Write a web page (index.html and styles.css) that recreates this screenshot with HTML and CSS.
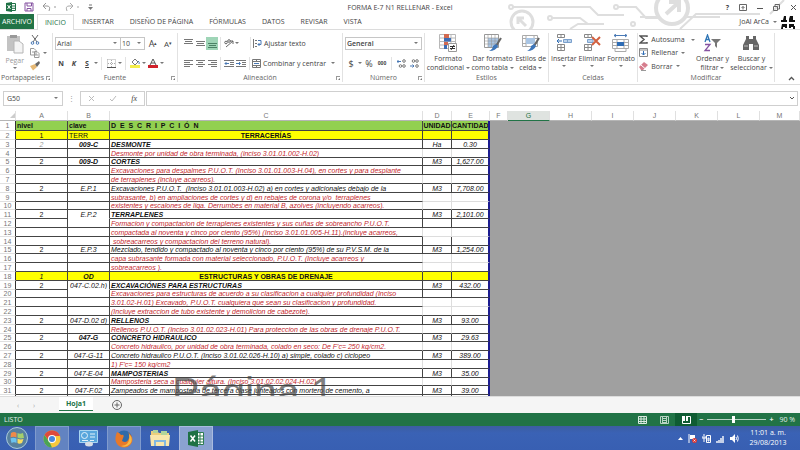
FILE: index.html
```html
<!DOCTYPE html>
<html lang="es">
<head>
<meta charset="utf-8">
<title>FORMA E-7 N1 RELLENAR - Excel</title>
<link rel="stylesheet" href="styles.css">
</head>
<body>
<div class="app">
  <header class="top">
    <svg class="circuit" width="320" height="29" viewBox="0 0 320 29" fill="none" stroke="#dedede" stroke-width="2">
      <path d="M50 7H110L118 15H144M72 18H100L108 24H124M160 17H240M200 29L216 14H280M290 14L304 0M90 29L98 24H124"/>
      <circle cx="31" cy="7" r="2"/><path d="M33 7H50M138 7H156L166 18H180"/><circle cx="136" cy="7" r="2"/><circle cx="70" cy="18" r="2"/><circle cx="153" cy="24" r="2"/>
      <circle cx="42" cy="22" r="11" stroke-width="3"/><path d="M46 26L38 18M38 24V18H44" stroke-width="3"/>
      <circle cx="192" cy="8" r="16" stroke-width="4" fill="#fff"/><path d="M186 14L198 3M189 2H199V12" stroke-width="4"/>
    </svg>
    <div class="titlebar">
      <div class="quick">
        <svg width="10" height="10" viewBox="0 0 10 10"><path d="M0 1L6 0V10L0 9Z" fill="#1e7145"/><path d="M6 1.500H9.500V8.500H6M6 4H9.500M6 6.300H9.500" fill="none" stroke="#1e7145"/><path d="M1.500 3L4.500 7M4.500 3L1.500 7" stroke="#fff"/></svg>
        <button aria-label="Guardar"><svg width="10" height="10" viewBox="0 0 10 10" fill="none" stroke="#8552a1"><path d="M1 1H9V9H1ZM3 1V4H7.500V1M3 9V6.500H7V9"/></svg></button>
        <button aria-label="Deshacer"><svg width="15" height="10" viewBox="0 0 15 10" fill="none" stroke="#999"><path d="M4 1L1 4L4 7M1 4H5Q9 4 7 9"/><path d="M12 5H14"/></svg></button>
        <button aria-label="Rehacer"><svg width="15" height="10" viewBox="0 0 15 10" fill="none" stroke="#aaa"><path d="M5 1L8 4L5 7M8 4H4Q0 4 2 9"/><path d="M12 5H14"/></svg></button>
        <button aria-label="Personalizar"><svg width="5" height="6" viewBox="0 0 5 6"><path d="M1 1H4" stroke="#777"/><path d="M0 3H5L2.500 6Z" fill="#777"/></svg></button>
      </div>
      <h1>FORMA E-7 N1 RELLENAR - Excel</h1>
      <div class="winctl">
        <button aria-label="Ayuda"><b>?</b></button>
        <button aria-label="Opciones de cinta"><svg width="8" height="7" viewBox="0 0 8 7" fill="none" stroke="#666"><path d="M.5.500H7.500V6.500H.5ZM4 5.500V2.500M2.500 4L4 2.500L5.500 4"/></svg></button>
        <button aria-label="Minimizar"><svg width="6" height="7" viewBox="0 0 6 7"><path d="M0 4.500H6" stroke="#555"/></svg></button>
        <button aria-label="Restaurar"><svg width="7" height="7" viewBox="0 0 7 7" fill="none" stroke="#666"><path d="M.5 2.500H4.500V6.500H.5ZM2 2V.5H6.500V5H5"/></svg></button>
        <button aria-label="Cerrar"><svg width="7" height="7" viewBox="0 0 7 7"><path d="M1 1L6 6M6 1L1 6" stroke="#555"/></svg></button>
      </div>
    </div>
    <nav class="tabs">
      <a class="file" href="#">ARCHIVO</a>
      <a class="on" href="#">INICIO</a>
      <a href="#">INSERTAR</a>
      <a href="#">DISEÑO DE PÁGINA</a>
      <a href="#">FÓRMULAS</a>
      <a href="#">DATOS</a>
      <a href="#">REVISAR</a>
      <a href="#">VISTA</a>
      <span class="user">JoAl ArCa <i class="dd"></i>
        <svg width="14" height="14" viewBox="0 0 14 14"><path fill="#fff" d="M0 0H14V14H0Z"/><path d="M3 1h2v4h1v2H0V5h2zM9 1h3v4h2v2H8V4zM1 9h5v4H4v-1H2v2H0zM8 9h5v2h1v3h-2v-2h-2v1H8z" fill="#111"/></svg>
      </span>
    </nav>
  </header>

  <section class="ribbon">
    <div class="group clip">
      <div class="gbody">
        <button class="big faded"><svg width="18" height="20" viewBox="0 0 18 20"><path d="M1 2H14V17H1Z" fill="#c3c3c3"/><path d="M4 1H11V4H4Z" fill="#999"/><path d="M8 7H13L17 10V19H8Z" fill="#f4f4f4" stroke="#b5b5b5"/></svg>Pegar<i class="dd"></i></button>
        <div class="stack">
          <button aria-label="Cortar"><svg width="10" height="10" viewBox="0 0 10 10" fill="none" stroke="#666"><path d="M2 0L7 7M8 0L3 7"/><circle cx="2.500" cy="8" r="1.300" stroke="#4979b5"/><circle cx="7.500" cy="8" r="1.300" stroke="#4979b5"/></svg></button>
          <button aria-label="Copiar"><svg width="10" height="10" viewBox="0 0 10 10" fill="#fff" stroke="#999"><path d="M.5.500H4L6 2.500V7H.5ZM4.500 3.500H7L9 5.500V9.500H4.500ZM2 4H4M6 7H8"/></svg><i class="dd"></i></button>
          <button aria-label="Copiar formato"><svg width="10" height="10" viewBox="0 0 10 10"><path d="M0 5L5 3L7 6L3 9.500Z" fill="#e6b976"/><path d="M5 3L9 0L10 2L7 6Z" fill="#666"/></svg></button>
        </div>
      </div>
      <div class="glabel">Portapapeles<i class="launch"></i></div>
    </div>

    <div class="group font">
      <div class="gbody rows">
        <div class="line">
          <div class="combo">
            <span class="sel face"><select aria-label="Fuente"><option>Arial</option></select><i class="dd"></i></span>
            <span class="sel size"><select aria-label="Tamaño"><option>10</option></select><i class="dd"></i></span>
          </div>
          <button class="tool grow">A<sup>▴</sup></button>
          <button class="tool shrink">A<sup>▾</sup></button>
        </div>
        <div class="line">
          <button class="tool"><b>N</b></button>
          <button class="tool"><b><i>K</i></b></button>
          <button class="tool"><b><u>S</u></b></button><i class="dd"></i>
          <span class="sep"></span>
          <button class="tool" aria-label="Bordes"><svg width="9" height="9" viewBox="0 0 9 9" fill="none" stroke="#aaa"><path d="M.5.500H8.500V8.500M.5.500V8.500M4.500 1V8M1 4.500H8" stroke-dasharray="1 1"/><path d="M0 8.500H9" stroke="#555"/></svg></button><i class="dd"></i>
          <span class="sep"></span>
          <button class="tool" aria-label="Color de relleno"><svg width="10" height="10" viewBox="0 0 10 10"><path d="M2 4L5 1L8 4L5 7Z" fill="#fff" stroke="#777"/><path d="M8 3Q10 4 9 6" fill="none" stroke="#4979b5"/><path d="M0 7H10V10H0Z" fill="#f4ee4c"/></svg></button><i class="dd"></i>
          <button class="tool" aria-label="Color de fuente"><svg width="10" height="10" viewBox="0 0 10 10"><path d="M2 7L5 1L8 7M3 5H7" fill="none" stroke="#555"/><path d="M0 7H10V10H0Z" fill="#d0202a"/></svg></button><i class="dd"></i>
        </div>
      </div>
      <div class="glabel">Fuente<i class="launch"></i></div>
    </div>

    <div class="group align">
      <div class="gbody rows">
        <div class="line">
          <button class="tool" aria-label="Alinear arriba"><svg width="9" height="9" viewBox="0 0 9 9" stroke="#777"><path d="M0 .5H9M1 2.500H8M0 4.500H9"/></svg></button>
          <button class="tool" aria-label="Alinear en medio"><svg width="9" height="9" viewBox="0 0 9 9" stroke="#777"><path d="M0 2.500H9M1 4.500H8M0 6.500H9"/></svg></button>
          <button class="tool picked" aria-label="Alinear abajo"><svg width="9" height="9" viewBox="0 0 9 9" stroke="#4b8265"><path d="M0 4.500H9M1 6.500H8M0 8.500H9"/></svg></button>
          <span class="sep"></span>
          <button class="tool" aria-label="Orientación"><svg width="10" height="9" viewBox="0 0 10 9" fill="none" stroke="#666"><path d="M2 8L9 2M9 5V2H6"/><circle cx="2" cy="3.500" r="1.300"/><circle cx="5" cy="2" r="1.300"/></svg></button><i class="dd"></i>
          <span class="sep far"></span>
          <button class="wide"><svg width="9" height="9" viewBox="0 0 9 9" fill="none" stroke="#777"><path d="M.5 0V9M2 1.500H4M2 4.500H4M2 7.500H4"/><path d="M5 1.500H8V5.500H5M6.500 4L5 5.500L6.500 7" stroke="#4979b5"/></svg>Ajustar texto</button>
        </div>
        <div class="line">
          <button class="tool" aria-label="Izquierda"><svg width="9" height="9" viewBox="0 0 9 9" stroke="#777"><path d="M0 1.500H9M0 3.500H6M0 5.500H9M0 7.500H6"/></svg></button>
          <button class="tool" aria-label="Centrar"><svg width="9" height="9" viewBox="0 0 9 9" stroke="#777"><path d="M0 1.500H9M2 3.500H7M0 5.500H9M2 7.500H7"/></svg></button>
          <button class="tool" aria-label="Derecha"><svg width="9" height="9" viewBox="0 0 9 9" stroke="#777"><path d="M0 1.500H9M3 3.500H9M0 5.500H9M3 7.500H9"/></svg></button>
          <span class="sep"></span>
          <button class="tool" aria-label="Disminuir sangría"><svg width="10" height="9" viewBox="0 0 10 9" fill="none" stroke="#777"><path d="M0 1.500H10M6 3.500H10M6 5.500H10M0 7.500H10"/><path d="M5 4.500H1M2.500 3L1 4.500L2.500 6" stroke="#4979b5"/></svg></button>
          <button class="tool" aria-label="Aumentar sangría"><svg width="10" height="9" viewBox="0 0 10 9" fill="none" stroke="#777"><path d="M0 1.500H10M6 3.500H10M6 5.500H10M0 7.500H10"/><path d="M0 4.500H4M3 3L4.500 4.500L3 6" stroke="#4979b5"/></svg></button>
          <span class="sep"></span>
          <button class="wide"><svg width="9" height="9" viewBox="0 0 9 9" fill="none" stroke="#777"><path d="M.5.500H8.500V8.500H.5ZM0 2.500H9M0 6.500H9M4.500 0V2M4.500 7V9"/><path d="M2 4.500H7" stroke="#4979b5"/></svg>Combinar y centrar<i class="dd gap"></i></button>
        </div>
      </div>
      <div class="glabel">Alineación<i class="launch"></i></div>
    </div>

    <div class="group number">
      <div class="gbody rows">
        <div class="line"><span class="sel format"><select aria-label="Formato de número"><option>General</option></select><i class="dd"></i></span></div>
        <div class="line">
          <button class="tool large">$</button><i class="dd"></i>
          <button class="tool large">%</button>
          <button class="tool tiny"><b>000</b></button>
          <span class="sep"></span>
          <button class="tool two" aria-label="Aumentar decimales"><svg width="9" height="9" viewBox="0 0 9 9" fill="none" stroke="#777"><path d="M0 2.500H4M1.500 1L0 2.500L1.500 4" stroke="#4979b5"/><circle cx="7" cy="2" r="1.300"/><circle cx="3.500" cy="7" r="1.300"/><circle cx="7" cy="7" r="1.300"/></svg></button>
          <button class="tool two" aria-label="Disminuir decimales"><svg width="9" height="9" viewBox="0 0 9 9" fill="none" stroke="#777"><path d="M0 7H4M2.500 5.500L4 7L2.500 8.500" stroke="#4979b5"/><circle cx="3.500" cy="2" r="1.300"/><circle cx="7" cy="2" r="1.300"/><circle cx="7" cy="7" r="1.300"/></svg></button>
        </div>
      </div>
      <div class="glabel">Número<i class="launch"></i></div>
    </div>

    <div class="group styles">
      <div class="gbody">
        <button class="big"><svg width="18" height="18" viewBox="0 0 18 18"><path d="M.5.500H16.500V14.500H.5ZM0 4H17M0 7.500H17M0 11H17M12 0V14" fill="none" stroke="#b8b8b8"/><path d="M5 0H10V4H5ZM5 8H9V11H5Z" fill="#d36a50"/><path d="M5 4H12V7.500H5ZM5 11H8V15H5Z" fill="#3e6db5"/><path d="M9.500 9.500H17.500V17.500H9.500Z" fill="#fff" stroke="#999"/><path d="M11 12.500H16M11 14.500H16M15 11L12 16" stroke="#333"/></svg><span>Formato<br>condicional <i class="dd"></i></span></button>
        <button class="big"><svg width="18" height="18" viewBox="0 0 18 18"><path d="M.5.500H14.500V13.500H.5Z" fill="#fff" stroke="#999"/><path d="M4 4H14V13H4Z" fill="#a9c5e4"/><path d="M0 4H15M0 7H15M0 10H15M4 0V14M7.500 0V14M11 0V14" stroke="#999" stroke-width=".6"/><path d="M17 4L12 12" stroke="#666" stroke-width="2"/><path d="M12 10L14 12Q12 17 5 17Q9 15 9 12Z" fill="#3c75b9"/></svg><span>Dar formato<br>como tabla <i class="dd"></i></span></button>
        <button class="big"><svg width="18" height="18" viewBox="0 0 18 18"><path d="M.5 1.500H15.500V12.500H.5ZM0 4.500H16M4 1V13M12 1V13M0 9.500H16" fill="#fff" stroke="#aaa"/><path d="M4 4H13V10H4Z" fill="#a9c5e4"/><path d="M17 4L12 12" stroke="#666" stroke-width="2"/><path d="M12 10L14 12Q12 17 5 17Q9 15 9 12Z" fill="#3c75b9"/></svg><span>Estilos de<br>celda <i class="dd"></i></span></button>
      </div>
      <div class="glabel">Estilos</div>
    </div>

    <div class="group cells">
      <div class="gbody">
        <button class="big"><svg width="18" height="18" viewBox="0 0 18 18" fill="#fff" stroke="#888"><path d="M2.500.500H9.500V3.500H2.500ZM6 0V4M2.500 10.500H9.500V16.500H2.500ZM6 10V17M2 13.500H10"/><path d="M8.500 5.500H16.500V8.500H8.500ZM12.500 5V9" fill="#bcd3ec" stroke="#7ba0cc"/><path d="M7 7H2M4 5L2 7L4 9" stroke="#2f6db5"/></svg>Insertar<i class="dd"></i></button>
        <button class="big"><svg width="18" height="18" viewBox="0 0 18 18" fill="#fff" stroke="#888"><path d="M1.500.500H8.500V3.500H1.500ZM5 0V4M1.500 10.500H8.500V16.500H1.500ZM5 10V17M1 13.500H9"/><path d="M4.500 5.500H10V8.500H4.500Z" fill="#bcd3ec" stroke="#7ba0cc"/><path d="M9 3L17 11M17 3L9 11" stroke="#d2603f" stroke-width="2"/></svg>Eliminar<i class="dd"></i></button>
        <button class="big"><svg width="18" height="18" viewBox="0 0 18 18" fill="none" stroke="#888"><path d="M2 1.500H15M4 0L2 1.500L4 3M13 0L15 1.500L13 3" stroke="#4979b5"/><path d="M.5 5.500H16.500V14.500H.5ZM0 8.500H17M0 11.500H17M5 5V15M12 5V15M3 15V17.500H14V15" stroke="#aaa"/><path d="M5 8H12V12H5Z" fill="#2f6db5" stroke="none"/></svg>Formato<i class="dd"></i></button>
      </div>
      <div class="glabel">Celdas</div>
    </div>

    <div class="group edit">
      <div class="gbody">
        <div class="stack">
          <button class="wide"><svg width="9" height="9" viewBox="0 0 9 9" fill="none" stroke="#555" stroke-width="1.500"><path d="M8 2V1H1L5 4.500L1 8H8V7"/></svg>Autosuma <i class="dd gap"></i></button>
          <button class="wide"><svg width="9" height="9" viewBox="0 0 9 9" fill="none" stroke="#888"><path d="M.5.500H8.500V8.500H.5ZM0 2H9"/><path d="M4.500 3V7M2.500 5L4.500 7L6.500 5" stroke="#2f6db5"/></svg>Rellenar <i class="dd"></i></button>
          <button class="wide"><svg width="9" height="9" viewBox="0 0 9 9"><path d="M0 5L5 0L9 3L4 8H2Z" fill="#d67d8d"/><path d="M2 3L6 6.500" stroke="#fff"/><path d="M2 8.500H7" stroke="#999"/></svg>Borrar <i class="dd"></i></button>
        </div>
        <button class="big"><svg width="18" height="18" viewBox="0 0 18 18" fill="none"><path d="M2 8L4.500 1L7 8M3 5.500H6" stroke="#2f75b5" stroke-width="1.300"/><path d="M2 10.500H7L2 16.500H7" stroke="#8552a1" stroke-width="1.300"/><path d="M8 5H18L14 9V14L12 12V9Z" fill="#777"/></svg><span>Ordenar y<br>filtrar <i class="dd"></i></span></button>
        <button class="big"><svg width="18" height="18" viewBox="0 0 18 18" fill="#666"><path d="M4 2H7V5H11V2H14V5L17 11V16H11V10H7V16H1V11L4 5Z"/><path d="M2 12H6M12 12H16" stroke="#bbb"/></svg><span>Buscar y<br>seleccionar <i class="dd"></i></span></button>
      </div>
      <div class="glabel">Modificar</div>
    </div>
    <button class="collapse" aria-label="Contraer la cinta"><svg width="7" height="5" viewBox="0 0 7 5"><path d="M1 4L3.500 1.500L6 4" fill="none" stroke="#555" stroke-width="1.300"/></svg></button>
  </section>

  <section class="fbar">
    <label class="box name"><input aria-label="Cuadro de nombres" value="G50"><i class="dd"></i></label>
    <span class="dots">⋮</span>
    <div class="box fx">
      <button aria-label="Cancelar"><svg width="7" height="7" viewBox="0 0 7 7"><path d="M1 1L6 6M6 1L1 6" stroke="#bbb"/></svg></button>
      <button aria-label="Introducir"><svg width="8" height="7" viewBox="0 0 8 7"><path d="M1 4L3 6L7 1" fill="none" stroke="#bbb"/></svg></button>
      <button class="fn"><i>fx</i></button>
    </div>
    <label class="box formula"><input aria-label="Barra de fórmulas"><svg width="6" height="5" viewBox="0 0 6 5"><path d="M1 1L3 3L5 1" fill="none" stroke="#555"/></svg></label>
  </section>

  <main class="sheet">
    <table>
      <colgroup><col class="w0"><col class="wa"><col class="wb"><col class="wc"><col class="wd"><col class="we"><col class="wf"><col class="wg"><col class="wg"><col class="wg"><col class="wg"><col class="wg"><col class="wg"><col></colgroup>
      <thead><tr><th><svg width="5" height="5" viewBox="0 0 5 5"><path d="M5 0V5H0Z" fill="#ccc"/></svg></th><th>A</th><th>B</th><th>C</th><th>D</th><th>E</th><th>F</th><th class="cur">G</th><th>H</th><th>I</th><th>J</th><th>K</th><th>L</th><th>M</th></tr></thead>
      <tbody>
        <tr class="head"><th>1</th><td>nivel</td><td>clave</td><td>D&nbsp; E&nbsp; S&nbsp; C&nbsp; R&nbsp; I&nbsp; P&nbsp; C&nbsp; I&nbsp; Ó&nbsp; N</td><td>UNIDAD</td><td>CANTIDAD</td><td class="void" colspan="8" rowspan="32"></td></tr>
        <tr class="sect plain"><th>2</th><td>1</td><td>TERR</td><td>TERRACERÍAS</td><td></td><td></td></tr>
        <tr class="item"><th>3</th><td class="dim">2</td><td>009-C</td><td>DESMONTE</td><td>Ha</td><td>0.30</td></tr>
        <tr class="note loose"><th>4</th><td></td><td></td><td>Desmonte por unidad de obra terminada, (inciso 3.01.01.002-H.02)</td><td></td><td></td></tr>
        <tr class="item"><th>5</th><td>2</td><td>009-D</td><td>CORTES</td><td>M3</td><td>1,627.00</td></tr>
        <tr class="note"><th>6</th><td></td><td></td><td>Excavaciones para despalmes P.U.O.T. (Inciso 3.01.01.003-H.04), en cortes y para desplante</td><td></td><td></td></tr>
        <tr class="note loose"><th>7</th><td></td><td></td><td>de terraplenes (incluye acarreos).</td><td></td><td></td></tr>
        <tr><th>8</th><td>2</td><td>E.P.1</td><td>Excavaciones P.U.O.T.&nbsp; (Inciso 3.01.01.003-H.02) a) en cortes y adicionales debajo de la</td><td>M3</td><td>7,708.00</td></tr>
        <tr class="note loose bare"><th>9</th><td></td><td></td><td>subrasante, b) en ampliaciones de cortes y d) en rebajes de corona y/o&nbsp; terraplenes</td><td></td><td></td></tr>
        <tr class="note loose"><th>10</th><td></td><td></td><td>existentes y escalones de liga. Derrumbes en material B, azolves (incluyendo acarreos).</td><td></td><td></td></tr>
        <tr class="item light joined"><th>11</th><td>2</td><td>E.P.2</td><td>TERRAPLENES</td><td>M3</td><td>2,101.00</td></tr>
        <tr class="note"><th>12</th><td></td><td></td><td>Formacion y compactacion de terraplenes existentes y sus cuñas de sobreancho P.U.O.T.</td><td></td><td></td></tr>
        <tr class="note loose bare"><th>13</th><td></td><td></td><td>compactada al noventa y cinco por ciento (95%) (Inciso 3.01.01.005-H.11).(incluye acarreos,</td><td></td><td></td></tr>
        <tr class="note"><th>14</th><td></td><td></td><td>&nbsp;sobreacarreos y compactacion del terreno natural).</td><td></td><td></td></tr>
        <tr><th>15</th><td>2</td><td>E.P.3</td><td>Mezclado, tendido y compactado al noventa y cinco por ciento (95%) de su P.V.S.M. de la</td><td>M3</td><td>1,254.00</td></tr>
        <tr class="note loose bare"><th>16</th><td></td><td></td><td>capa subrasante formada con material seleccionado, P.U.O.T. (Incluye acarreos y</td><td></td><td></td></tr>
        <tr class="note loose"><th>17</th><td></td><td></td><td>sobreacarreos ).</td><td></td><td></td></tr>
        <tr class="sect"><th>18</th><td>1</td><td>OD</td><td>ESTRUCTURAS Y OBRAS DE DRENAJE</td><td></td><td></td></tr>
        <tr class="item light joined"><th>19</th><td>2</td><td>047-C.02.h)</td><td>EXCAVACIÓNES PARA ESTRUCTURAS</td><td>M3</td><td>432.00</td></tr>
        <tr class="note"><th>20</th><td></td><td></td><td>Excavaciones para estructuras de acuerdo a su clasificacion a cualquier profundidad (Inciso</td><td></td><td></td></tr>
        <tr class="note loose bare"><th>21</th><td></td><td></td><td>3.01.02-H.01) Excavado, P.U.O.T. cualquiera que sean su clasificacion y profundidad.</td><td></td><td></td></tr>
        <tr class="note loose"><th>22</th><td></td><td></td><td>(Incluye extraccion de tubo existente y demolicion de cabezote).</td><td></td><td></td></tr>
        <tr class="item light"><th>23</th><td>2</td><td>047-D.02 d)</td><td>RELLENOS</td><td>M3</td><td>93.00</td></tr>
        <tr class="note loose"><th>24</th><td></td><td></td><td>Rellenos P.U.O.T. (Inciso 3.01.02.023-H.01) Para proteccion de las obras de drenaje P.U.O.T.</td><td></td><td></td></tr>
        <tr class="item"><th>25</th><td>2</td><td>047-G</td><td>CONCRETO HIDRAULICO</td><td>M3</td><td>29.63</td></tr>
        <tr class="note loose"><th>26</th><td></td><td></td><td>Concreto hidraulico, por unidad de obra terminada, colado en seco: De F'c= 250 kg/cm2.</td><td></td><td></td></tr>
        <tr><th>27</th><td>2</td><td>047-G-11</td><td>Concreto hidraulico P.U.O.T. (Inciso 3.01.02.026-H.10) a) simple, colado c) ciclopeo</td><td>M3</td><td>389.00</td></tr>
        <tr class="note loose"><th>28</th><td></td><td></td><td>1) F'c= 150 kg/cm2</td><td></td><td></td></tr>
        <tr class="item light"><th>29</th><td>2</td><td>047-E-04</td><td>MAMPOSTERIAS</td><td>M3</td><td>35.00</td></tr>
        <tr class="note loose"><th>30</th><td></td><td></td><td>Mamposteria seca a cualquier altura. (Inciso 3.01.02.02.024-H.02)</td><td></td><td></td></tr>
        <tr><th>31</th><td>2</td><td>047-F.02</td><td>Zampeados de mamposteria de tercera clase junteados con mortero de cemento, a</td><td>M3</td><td>39.00</td></tr>
        <tr><th>32</th><td></td><td></td><td>cualquier altura P.U.O.T. (Inciso 3.01.02.027-H.04)</td><td></td><td></td></tr>
      </tbody>
    </table>
    <div class="watermark">Página 1</div>
  </main>

  <nav class="sheets">
    <button aria-label="Hoja anterior">‹</button><button aria-label="Hoja siguiente">›</button>
    <a href="#">Hoja1</a>
    <button class="add" aria-label="Nueva hoja"><svg width="10" height="10" viewBox="0 0 10 10" fill="none" stroke="#666"><circle cx="5" cy="5" r="4.500"/><path d="M5 2.500V7.500M2.500 5H7.500"/></svg></button>
  </nav>

  <footer class="status">
    <span class="ready">LISTO</span>
    <button class="view" aria-label="Normal"><svg width="9" height="8" viewBox="0 0 9 8" fill="none" stroke="#dcebe2"><path d="M.5.500H8.500V7.500H.5ZM3 0V8M6 0V8M0 3H9M0 5.500H9"/></svg></button>
    <button class="view" aria-label="Diseño de página"><svg width="9" height="8" viewBox="0 0 9 8" fill="none" stroke="#b9d4c5"><path d="M.5.500H8.500V7.500H.5ZM2.500 1V7M6.500 1V7M3 2.500H6M3 4.500H6M3 6.500H6"/></svg></button>
    <button class="view on" aria-label="Vista de saltos de página"><svg width="9" height="8" viewBox="0 0 9 8"><path d="M0 0H3V5H0ZM4 0H6V5H4Z" fill="#fff"/><path d="M6 .5H8.500V7.500H.5V5" fill="none" stroke="#fff"/></svg></button>
    <span class="pm">−</span><input type="range" min="0" max="200" value="90" aria-label="Zoom"><span class="pm">+</span>
    <span class="pct">90 %</span>
  </footer>

  <footer class="taskbar">
    <button class="task start" aria-label="Inicio"><svg width="22" height="22" viewBox="0 0 22 22"><circle cx="11" cy="11" r="10.500" fill="#57809e" stroke="#a9c9dc"/><path d="M5 6Q8 4 10.500 6V10.500Q7 9 4.500 10.500Z" fill="#ee8a4a"/><path d="M11.500 6Q14 7.500 17 6L18 11Q14 12 11.500 10.500Z" fill="#a4cf6c"/><path d="M4.500 11.500Q7 10 10.500 11.500V16Q8 14.500 5.500 16Z" fill="#6cc3ef"/><path d="M11.500 11.500Q14 13 17.500 12L16 16Q13 17.500 11.500 16Z" fill="#f8dc60"/></svg></button>
    <button class="task open" aria-label="Chrome"><svg width="18" height="18" viewBox="0 0 18 18"><circle cx="9" cy="9" r="8.500" fill="#f4c93c"/><path d="M1.500 5A8.500 8.500 0 0 1 17 6H9L6 11Z" fill="#dd4a3c"/><path d="M1.500 5L7 13L9 17.500A8.500 8.500 0 0 1 1.500 5Z" fill="#4aa454"/><circle cx="9" cy="9" r="4" fill="#fff"/><circle cx="9" cy="9" r="3" fill="#4687dd"/></svg></button>
    <button class="task" aria-label="Panel de control"><svg width="19" height="17" viewBox="0 0 19 17"><path d="M.5.500H18.500V12.500H.5Z" fill="#58a6dc" stroke="#a9d6f1"/><circle cx="5.500" cy="5.500" r="3" fill="none" stroke="#e2f2fb"/><path d="M11 4H16M11 7H16M3 10.500H9M11 10.500H15" stroke="#e2f2fb"/><ellipse cx="10" cy="14" rx="4" ry="2.500" fill="#d8dde5"/></svg></button>
    <button class="task open" aria-label="Firefox"><svg width="18" height="18" viewBox="0 0 18 18"><circle cx="9" cy="8.500" r="8" fill="#2f6aa9"/><path d="M2 2Q5 3 6 5Q10 4 8 8L7 11Q12 14 14 8Q15 5 13 2Q20 8 16 14Q11 20 4 16Q-1 12 1 5Z" fill="#e8792a"/><path d="M14 4Q19 9 15 14Q11 18 6 16Q16 15 14 4Z" fill="#f6ba45"/></svg></button>
    <button class="task" aria-label="Explorador"><svg width="20" height="18" viewBox="0 0 20 18"><path d="M1 2H7L9 4H19V16H1Z" fill="#ebcf7d"/><path d="M3 1H8V4H3ZM11 2H17V6H11Z" fill="#b1d49b"/><path d="M0 6H20L19 17H1Z" fill="#f9e7ac"/><path d="M5 17V12H15V17" fill="none" stroke="#83b9df" stroke-width="2"/></svg></button>
    <button class="task open bright" aria-label="Excel"><svg width="16" height="17" viewBox="0 0 16 17"><path d="M9 2.500H15.500V14.500H9M9 6H15M9 9H15M9 12H15M12 3V14" fill="#fff" stroke="#2d7d50"/><path d="M0 2L10 0V17L0 15Z" fill="#1e7145"/><path d="M2.500 5.500L7 11.500M7 5.500L2.500 11.500" stroke="#fff" stroke-width="1.500"/></svg></button>
    <div class="tray">
      <svg width="5" height="3" viewBox="0 0 5 3"><path d="M0 3L2.500 0L5 3Z" fill="#fff"/></svg>
      <svg width="9" height="9" viewBox="0 0 9 9"><path d="M1 0V9" stroke="#fff"/><path d="M2 1H7V5H2Z" fill="#fff"/><circle cx="6.500" cy="6.500" r="2.500" fill="#d83a3a"/><path d="M5.500 5.500L7.500 7.500M7.500 5.500L5.500 7.500" stroke="#fff" stroke-width=".7"/></svg>
      <svg width="9" height="9" viewBox="0 0 9 9" fill="none" stroke="#fff"><path d="M4.500 1.500H8.500V8.500H4.500ZM2 0V8M0 2V4H4V2"/><path d="M6 4H7V7H6Z"/></svg>
      <svg width="9" height="9" viewBox="0 0 9 9" stroke="#fff" stroke-width="1.400"><path d="M1 9V7M3 9V6M5 9V4M7 9V2"/></svg>
      <svg width="9" height="9" viewBox="0 0 9 9"><path d="M0 3H2L5 0V9L2 6H0Z" fill="#fff"/><path d="M6 3Q7 4.500 6 6M7.500 1.500Q9 4.500 7.500 7.500" fill="none" stroke="#fff"/></svg>
      <div class="clock">11:01 a. m.<br>29/08/2013</div>
    </div>
  </footer>
</div>
</body>
</html>
```

FILE: styles.css
```css
* { box-sizing: border-box; }

body {
  margin: 0;
  font: 7px/9px "Open Sans", "Noto Sans", sans-serif;
  color: #444;
  background: #fff;
}

button, input, select { font: inherit; color: inherit; }
button { padding: 0; border: 0; background: none; }
a { color: inherit; text-decoration: none; }
svg { display: block; flex: none; }

.app {
  height: 100vh;
  display: flex;
  flex-direction: column;
  overflow: hidden;
}

.dd {
  display: inline-block;
  flex: none;
  vertical-align: middle;
  border: 2px solid transparent;
  border-top-color: #777;
  border-bottom: 0;
}

/* title and tabs */
.top { position: relative; border-bottom: 1px solid #dcdcdc; }
.circuit { position: absolute; right: 0; top: 0; z-index: -1; }

.titlebar {
  height: 14px;
  display: grid;
  grid-template-columns: 1fr auto 1fr;
  align-items: center;
}
.titlebar h1 { margin: 0; font: inherit; }
.quick { display: flex; align-items: center; gap: 8px; padding-left: 6px; }
.winctl { display: flex; align-items: center; justify-content: flex-end; gap: 10px; padding-right: 3px; }

.tabs { height: 15px; display: flex; align-items: stretch; line-height: 15px; }
.tabs a { padding: 0 8px 0 7px; margin-right: 1px; white-space: nowrap; }
.tabs .file { padding: 0 2px; background: #217346; color: #fff; margin-right: 3px; }
.tabs .on { color: #217346; border: 1px solid #dcdcdc; border-bottom: 0; padding: 0 7px; background: #fff; margin-bottom: -1px; }
.user { margin-left: auto; display: flex; align-items: center; gap: 4px; padding-right: 5px; }

/* ribbon */
.ribbon { display: flex; height: 55px; padding-top: 3px; border-bottom: 1px solid #dcdcdc; }
.group {
  display: flex;
  flex-direction: column;
  margin-bottom: 2px;
  border-right: 1px solid #e2e2e2;
  white-space: nowrap;
}
.clip { flex: 0 0 53px; }
.font { flex: 0 0 120px; }
.align { flex: 0 0 165px; }
.number { flex: 0 0 82px; }
.styles { flex: 0 0 124px; }
.cells { flex: 0 0 89px; }
.edit { flex: 0 0 137px; }

.gbody { flex: 1; display: flex; justify-content: space-evenly; min-height: 0; }
.rows { flex-direction: column; justify-content: space-around; padding: 0 2px; }
.glabel { position: relative; text-align: center; color: #666; }
.clip .glabel { text-align: left; padding-left: 1px; }
.launch {
  position: absolute;
  right: 2px;
  bottom: 2px;
  width: 4px;
  height: 4px;
  border: solid #999;
  border-width: 1px 0 0 1px;
}
.launch::after {
  content: "";
  position: absolute;
  right: 0;
  bottom: 0;
  border: 1px solid #777;
  border-top-color: transparent;
  border-left-color: transparent;
}

.line { display: flex; align-items: center; height: 14px; }
.tool { width: 12px; height: 13px; display: grid; place-items: center; }
.picked { background: #9fd5b7; }
.large { font-size: 9px; }
.tiny { font-size: 5px; }
.sep { width: 1px; height: 13px; margin: 0 2px; background: #e2e2e2; }
.wide { display: flex; align-items: center; gap: 2px; }
.grow, .shrink { display: flex; align-items: center; justify-content: center; width: 14px; font-size: 9px; }
.shrink { font-size: 8px; }
.tool sup { font-size: 5px; line-height: 5px; }

.font .line { gap: 1px; }
.align .line { padding-left: 2px; }
.align .far { margin-left: 11px; }
.number .line:last-child { gap: 1px; }

.combo { display: flex; }
.sel { display: flex; align-items: center; position: relative; height: 13px; border: 1px solid #c6c6c6; }
.sel select { appearance: none; width: 100%; height: 100%; border: 0; padding: 0 1px; background: none; }
.sel .dd { position: absolute; right: 3px; }
.face { width: 66px; }
.size { width: 25px; margin-left: -1px; }
.format { width: 77px; }
.format select { font-weight: 600; }

.big { display: flex; flex-direction: column; align-items: center; gap: 2px; padding-top: 1px; }
.faded { color: #999; }
.stack { display: flex; flex-direction: column; justify-content: space-around; align-items: flex-start; }
.stack button { display: flex; align-items: center; gap: 3px; }
.gap { margin-left: 3px; }
.collapse { margin: auto 5px 3px auto; }

/* formula bar */
.fbar { display: flex; align-items: center; height: 26px; padding: 0 2px 0 3px; }
.box { display: flex; align-items: center; height: 15px; border: 1px solid #cfcfcf; }
.box input { flex: 1; min-width: 0; border: 0; padding: 0 3px; background: none; }
.name { width: 60px; padding-right: 4px; }
.dots { width: 17px; text-align: center; color: #999; }
.fx { width: 65px; justify-content: space-around; }
.fn { font: 8px "Liberation Serif", serif; }
.formula { flex: 1; margin-left: 1px; padding-right: 2px; }

/* worksheet */
.sheet { flex: 1; min-height: 0; position: relative; overflow: hidden; }
table {
  width: 100%;
  table-layout: fixed;
  border-collapse: separate;
  border-spacing: 0;
  font: 7px/7px "Liberation Sans", Arial, sans-serif;
  color: #111;
}
.w0 { width: 16px; }
.wa { width: 52px; }
.wb { width: 42px; }
.wc { width: 313px; }
.wd { width: 29px; }
.we { width: 38px; }
.wf { width: 18px; }
.wg { width: 42px; }

th { padding: 0; font-weight: normal; color: #777; border-right: 1px solid #e0e0e0; }
thead th { height: 10px; border-bottom: 1px solid #b5b5b5; }
thead svg { margin-left: auto; }
thead .cur { background: #dfe3e0; color: #217346; border-bottom-color: #217346; }
tbody th { border-bottom: 1px solid #e0e0e0; border-right-color: #333; }

tbody tr { height: 9px; }
tbody tr:nth-child(5n) { height: 8px; }
tbody .head { height: 10px; }

td {
  padding: 0 1px;
  border: solid #444;
  border-width: 0 1px 1px 0;
  text-align: center;
  font-style: italic;
  white-space: nowrap;
  overflow: hidden;
}
td:nth-child(2) { font-style: normal; }
td:nth-child(4) { text-align: left; }
td:nth-child(6) { border-right: 2px solid #1c1c90; }

.item td:nth-child(4), .item td:nth-child(3) { font-weight: bold; }
.light td:nth-child(3) { font-weight: normal; }
.joined td:nth-child(3) { border-bottom-color: transparent; }
.note td { color: #c5262c; }
.loose td:nth-child(4), .loose td:nth-child(5) { border-right-color: #ddd; }
.bare td:nth-child(5), .bare td:nth-child(6) { border-bottom-color: #ddd; }
td.dim { color: #999; font-style: italic; }

.head td { background: #92d050; font-weight: bold; font-style: normal; text-align: left; }
.head td:nth-child(n+5) { text-align: center; padding: 0; }
.sect td { background: #ff0; font-style: italic; }
.sect td:nth-child(3) { font-weight: bold; }
.sect td:nth-child(4) { font-weight: bold; font-style: normal; text-align: center; }
.plain td:nth-child(2), .plain td:nth-child(3) { font-style: normal; font-weight: normal; }
.plain td:nth-child(3) { text-align: left; }
tbody .head .void { background: #a0a0a0; border: 0; }

.watermark {
  position: absolute;
  left: 172px;
  top: 259px;
  font: 41px/44px "Liberation Sans", Arial, sans-serif;
  color: rgba(70, 70, 70, .7);
}

/* sheet tabs */
.sheets { display: flex; height: 17px; padding-left: 12px; background: #f5f5f5; border-top: 1px solid #ddd; }
.sheets button { width: 12px; margin-right: 4px; color: #aaa; }
.sheets a {
  margin: 0 19px 2px 15px;
  padding: 0 7px;
  background: #fff;
  border-bottom: 1px solid #217346;
  color: #217346;
  font-weight: bold;
  line-height: 14px;
}
.sheets .add { width: auto; margin: 0; }

/* status bar */
.status { display: flex; align-items: center; height: 13px; background: #217346; color: #e6f1eb; padding: 0 5px 0 4px; }
.ready { margin-right: auto; }
.view { width: 22px; height: 13px; display: grid; place-items: center; }
.view.on { background: #0f5c33; margin-right: 2px; }
.pm { width: 5px; text-align: center; font-weight: bold; }
.pct { width: 21px; text-align: right; }
.status input { appearance: none; width: 59px; height: 9px; margin: 0 3px; background: linear-gradient(#b9d4c5, #b9d4c5) center / 100% 1px no-repeat; }
.status input::-webkit-slider-thumb { appearance: none; width: 3px; height: 7px; background: #fff; }

/* taskbar */
.taskbar { display: flex; align-items: stretch; height: 24px; padding-right: 11px; background: linear-gradient(#3c5da2, #3a62b5 30%, #385fb2); }
.task { width: 34px; margin-right: 2px; display: grid; place-items: center; }
.start { width: 33px; }
.task.open { background: #6283c1; border: 1px solid #809bcd; border-bottom: 0; }
.task.bright { background: #8aa2d1; border-color: #a9bbdf; }
.tray { margin-left: auto; display: flex; align-items: center; gap: 5px; color: #fff; }
.clock { margin-left: 3px; width: 42px; text-align: center; line-height: 10px; white-space: nowrap; }
```
